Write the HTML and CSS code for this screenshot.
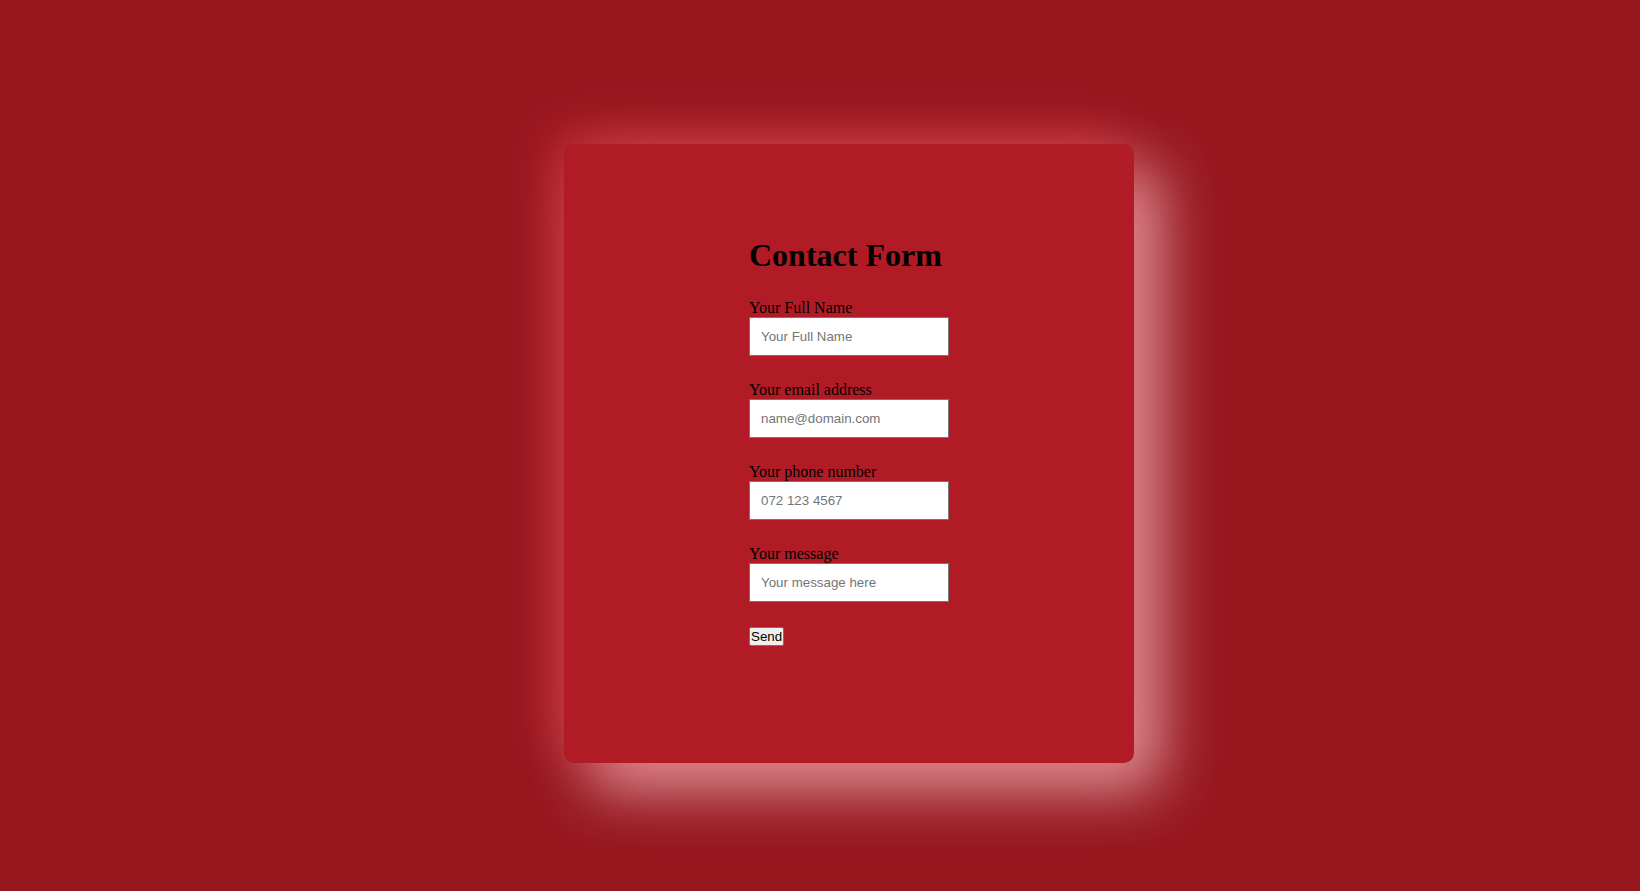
FILE: index.html
```html
<!DOCTYPE html>
<html>
<head>
<meta charset="utf-8">
<title>Contact Form</title>
<link rel="stylesheet" href="styles.css">
</head>
<body>
<div class="page">
  <div class="card">
    <form class="form">
      <h1 class="title">Contact Form</h1>
      <div class="group">
        <label class="label" for="name">Your Full Name</label>
        <input class="field" id="name" type="text" placeholder="Your Full Name">
      </div>
      <div class="group">
        <label class="label" for="email">Your email address</label>
        <input class="field" id="email" type="email" placeholder="name@domain.com">
      </div>
      <div class="group">
        <label class="label" for="phone">Your phone number</label>
        <input class="field" id="phone" type="tel" placeholder="072 123 4567">
      </div>
      <div class="group">
        <label class="label" for="msg">Your message</label>
        <input class="field" id="msg" type="text" placeholder="Your message here">
      </div>
      <button class="send" type="button">Send</button>
    </form>
  </div>
</div>
</body>
</html>
```
FILE: styles.css
```css
html, body {
  margin: 0;
  padding: 0;
  height: 100%;
}
body {
  background: #97171f;
  font-family: "Liberation Serif", "Times New Roman", serif;
  overflow: hidden;
}
.page {
  display: flex;
  padding: 144px 0 0 564px;
}
.card {
  width: 570px;
  height: 619px;
  box-sizing: border-box;
  background: #b11b25;
  border-radius: 10px;
  padding-top: 93px;
  display: flex;
  justify-content: center;
  box-shadow: -12px -12px 50px rgba(220, 55, 68, 0.6), 25px 25px 60px rgba(255, 210, 215, 0.72);
}
.form {
  width: 200px;
  display: flex;
  flex-direction: column;
  align-items: flex-start;
}
.title {
  margin: 0 0 25px 0;
  font-size: 32px;
  font-weight: bold;
  line-height: 37px;
  color: #000;
  white-space: nowrap;
}
.group {
  display: flex;
  flex-direction: column;
  margin-bottom: 25px;
  width: 200px;
}
.label {
  font-size: 16px;
  line-height: 18px;
  color: #000;
}
.field {
  width: 200px;
  height: 39px;
  box-sizing: border-box;
  padding: 10px 10px 10px 11px;
  border: 1px solid #767676;
  background: #fff;
  font-family: "Liberation Sans", Arial, sans-serif;
  font-size: 13.33px;
  margin: 0;
  color: #000;
}
.field::placeholder {
  color: #757575;
}
.send {
  font-family: "Liberation Sans", Arial, sans-serif;
  font-size: 13.33px;
  line-height: 15px;
  padding: 1px 1px;
  border: 1px solid #767676;
  border-radius: 2px;
  background: #efefef;
  color: #000;
  margin: 0;
}
```
